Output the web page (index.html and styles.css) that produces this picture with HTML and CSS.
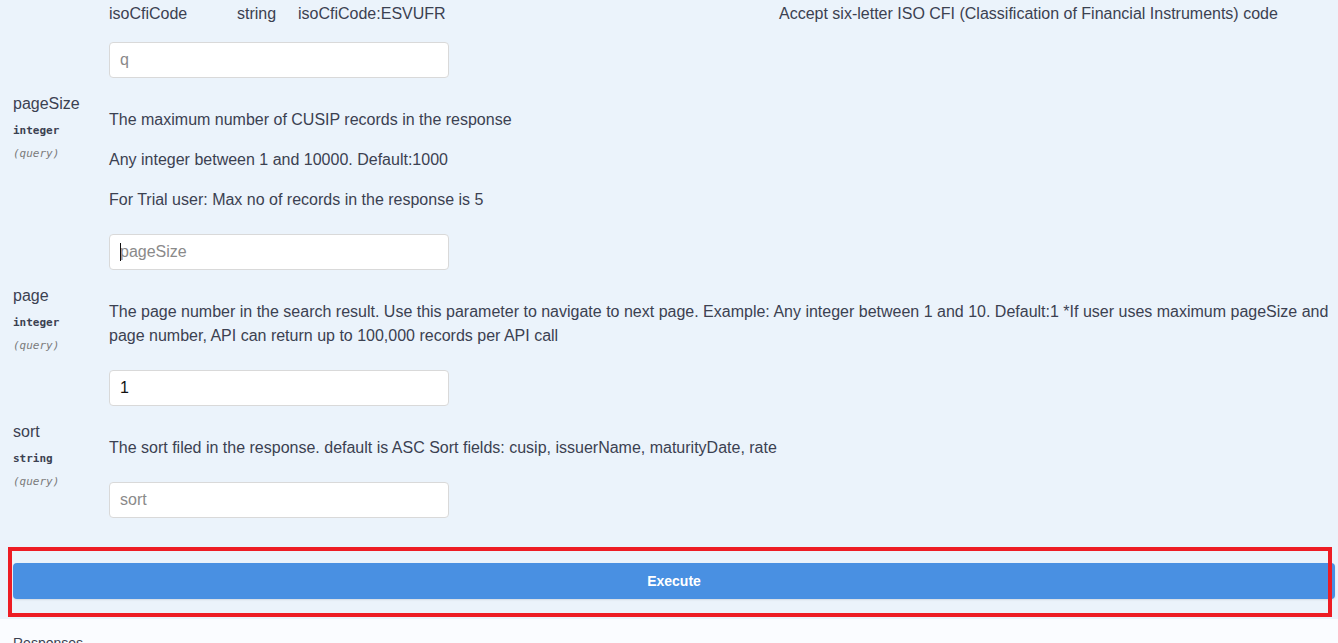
FILE: index.html
```html
<!DOCTYPE html>
<html>
<head>
<meta charset="UTF-8">
<meta name="viewport" content="width=device-width, initial-scale=1">
<title>Search CUSIP</title>
<link rel="stylesheet" href="styles.css">
</head>
<body>
<div class="opblock">
<div class="params">

<div class="prow">
<div class="pname"></div>
<div class="pdesc">
<div class="cfi">
<span>isoCfiCode</span>
<span>string</span>
<span>isoCfiCode:ESVUFR</span>
<span>Accept six-letter ISO CFI (Classification of Financial Instruments) code</span>
</div>
<input type="text" class="pinput" placeholder="q">
</div>
</div>

<div class="prow">
<div class="pname">
<div class="nm">pageSize</div>
<div class="ptype">integer</div>
<div class="pin">(query)</div>
</div>
<div class="pdesc">
<p>The maximum number of CUSIP records in the response</p>
<p>Any integer between 1 and 10000. Default:1000</p>
<p>For Trial user: Max no of records in the response is 5</p>
<div class="inwrap"><input type="text" class="pinput" placeholder="pageSize"><span class="caret"></span></div>
</div>
</div>

<div class="prow">
<div class="pname">
<div class="nm">page</div>
<div class="ptype">integer</div>
<div class="pin">(query)</div>
</div>
<div class="pdesc">
<p>The page number in the search result. Use this parameter to navigate to next page. Example: Any integer between 1 and 10. Default:1 *If user uses maximum pageSize and page number, API can return up to 100,000 records per API call</p>
<div class="inwrap"><input type="text" class="pinput" value="1"></div>
</div>
</div>

<div class="prow">
<div class="pname">
<div class="nm">sort</div>
<div class="ptype">string</div>
<div class="pin">(query)</div>
</div>
<div class="pdesc">
<p>The sort filed in the response. default is ASC Sort fields: cusip, issuerName, maturityDate, rate</p>
<div class="inwrap"><input type="text" class="pinput" placeholder="sort"></div>
</div>
</div>

</div>

<div class="execute-wrap">
<button class="btn-execute">Execute</button>
<div class="highlight"></div>
</div>
</div>

<div class="responses">
<h4>Responses</h4>
</div>
</body>
</html>
```

FILE: styles.css
```css
html, body {
    margin: 0;
    padding: 0;
}
body {
    font-family: "Liberation Sans", Arial, sans-serif;
    color: #3b4151;
    background: #fafcff;
    overflow: hidden;
}
.opblock {
    background: #ebf3fb;
}
.params {
    padding: 2px 3px 0 13px;
}
.prow {
    display: grid;
    grid-template-columns: 96px 1fr;
    padding-bottom: 14px;
}
.nm {
    font-size: 16px;
    line-height: 24px;
}
.ptype, .pin {
    font-family: "DejaVu Sans Mono", "Liberation Mono", monospace;
    font-size: 11px;
    line-height: 16px;
    margin-top: 7px;
}
.ptype {
    font-weight: bold;
}
.pin {
    font-style: italic;
    color: #7a7a7a;
}
.pdesc {
    font-size: 16px;
    line-height: 24px;
}
.pdesc p {
    margin: 16px 0;
}
.inwrap {
    position: relative;
    margin-top: 22px;
    width: 340px;
}
.cfi {
    display: grid;
    grid-template-columns: 128px 61px 481px auto;
    margin-bottom: 16px;
    white-space: nowrap;
}
.pinput {
    display: block;
    box-sizing: border-box;
    width: 340px;
    height: 36px;
    margin: 0;
    padding: 0 10px;
    font-family: "Liberation Sans", Arial, sans-serif;
    font-size: 16px;
    color: #111;
    background: #fff;
    border: 1px solid #d9d9d9;
    border-radius: 4px;
    outline: none;
}
.pinput::placeholder {
    color: #8a8a8a;
}
.caret {
    position: absolute;
    left: 11px;
    top: 9px;
    width: 1px;
    height: 18px;
    background: #111;
}
.execute-wrap {
    position: relative;
    padding: 31px 3px 20px 13px;
}
.btn-execute {
    display: block;
    width: 100%;
    height: 36px;
    margin: 0;
    border: 0;
    border-radius: 4px;
    background: #4990e2;
    color: #fff;
    font-family: "Liberation Sans", Arial, sans-serif;
    font-size: 14px;
    font-weight: bold;
    box-shadow: 0 1px 2px rgba(0,0,0,0.1);
}
.highlight {
    position: absolute;
    left: 8px;
    top: 15px;
    width: 1324px;
    height: 70px;
    box-sizing: border-box;
    border: 4px solid #ed1c24;
}
.responses {
    padding: 14px 13px;
}
.responses h4 {
    margin: 0;
    font-size: 14px;
    line-height: 20px;
    font-weight: normal;
}
```
